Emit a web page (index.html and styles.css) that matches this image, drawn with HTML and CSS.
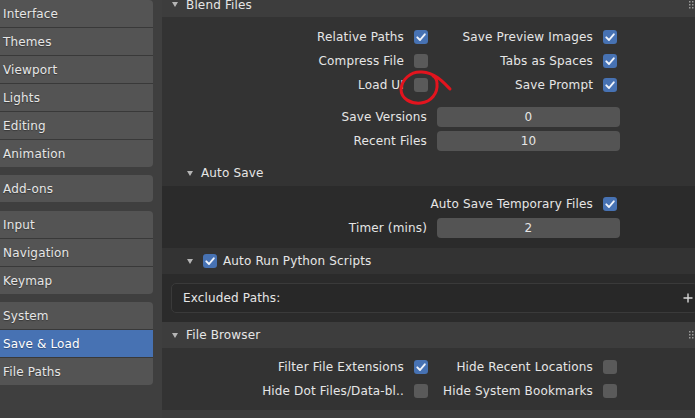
FILE: index.html
```html
<!DOCTYPE html>
<html>
<head>
<meta charset="utf-8">
<link rel="stylesheet" href="styles.css">
</head>
<body>
<div class="app">
  <nav class="sidebar">
    <div class="group">
      <div class="tab">Interface</div>
      <div class="tab">Themes</div>
      <div class="tab">Viewport</div>
      <div class="tab">Lights</div>
      <div class="tab">Editing</div>
      <div class="tab">Animation</div>
    </div>
    <div class="group g2">
      <div class="tab">Add-ons</div>
    </div>
    <div class="group g3">
      <div class="tab">Input</div>
      <div class="tab">Navigation</div>
      <div class="tab">Keymap</div>
    </div>
    <div class="group g4">
      <div class="tab">System</div>
      <div class="tab active">Save &amp; Load</div>
      <div class="tab">File Paths</div>
    </div>
  </nav>

  <main class="main">
    <section class="panel">
      <div class="panel-head first">
        <svg class="tri" width="6" height="5" viewBox="0 0 6 5"><polygon points="0,0 6,0 3,5"/></svg>
        <span class="head-title">Blend Files</span>
        <svg class="grip" width="5" height="8" viewBox="0 0 5 8"><rect x="0" y="0" width="1.5" height="1.5"/><rect x="3" y="0" width="1.5" height="1.5"/><rect x="0" y="3" width="1.5" height="1.5"/><rect x="3" y="3" width="1.5" height="1.5"/><rect x="0" y="6" width="1.5" height="1.5"/><rect x="3" y="6" width="1.5" height="1.5"/></svg>
      </div>
      <div class="panel-body blend">
        <div class="row2">
          <div class="cell left"><span>Relative Paths</span><span class="cb on"><svg width="14" height="14" viewBox="0 0 14 14"><path d="M3.3 7.3 L6 10 L10.8 4.3"/></svg></span></div>
          <div class="cell right"><span>Save Preview Images</span><span class="cb on"><svg width="14" height="14" viewBox="0 0 14 14"><path d="M3.3 7.3 L6 10 L10.8 4.3"/></svg></span></div>
        </div>
        <div class="row2">
          <div class="cell left"><span>Compress File</span><span class="cb"></span></div>
          <div class="cell right"><span>Tabs as Spaces</span><span class="cb on"><svg width="14" height="14" viewBox="0 0 14 14"><path d="M3.3 7.3 L6 10 L10.8 4.3"/></svg></span></div>
        </div>
        <div class="row2">
          <div class="cell left"><span>Load UI</span><span class="cb"></span></div>
          <div class="cell right"><span>Save Prompt</span><span class="cb on"><svg width="14" height="14" viewBox="0 0 14 14"><path d="M3.3 7.3 L6 10 L10.8 4.3"/></svg></span></div>
        </div>
        <div class="prow gap-top"><span class="plabel">Save Versions</span><div class="field">0</div></div>
        <div class="prow"><span class="plabel">Recent Files</span><div class="field">10</div></div>
      </div>

      <div class="sub-head">
        <svg class="tri" width="6" height="5" viewBox="0 0 6 5"><polygon points="0,0 6,0 3,5"/></svg>
        <span class="head-title">Auto Save</span>
      </div>
      <div class="sub-body autosave">
        <div class="row2">
          <div class="cell left"></div>
          <div class="cell right"><span>Auto Save Temporary Files</span><span class="cb on"><svg width="14" height="14" viewBox="0 0 14 14"><path d="M3.3 7.3 L6 10 L10.8 4.3"/></svg></span></div>
        </div>
        <div class="prow"><span class="plabel">Timer (mins)</span><div class="field">2</div></div>
      </div>

      <div class="sub-head">
        <svg class="tri" width="6" height="5" viewBox="0 0 6 5"><polygon points="0,0 6,0 3,5"/></svg>
        <span class="cb on head-cb"><svg width="14" height="14" viewBox="0 0 14 14"><path d="M3.3 7.3 L6 10 L10.8 4.3"/></svg></span>
        <span class="head-title">Auto Run Python Scripts</span>
      </div>
      <div class="sub-body autorun">
        <div class="listbox">
          <span>Excluded Paths:</span>
          <svg class="plus" width="10" height="10" viewBox="0 0 10 10"><path d="M5 0.5 V9.5 M0.5 5 H9.5"/></svg>
        </div>
      </div>
    </section>

    <section class="panel">
      <div class="panel-head">
        <svg class="tri" width="6" height="5" viewBox="0 0 6 5"><polygon points="0,0 6,0 3,5"/></svg>
        <span class="head-title">File Browser</span>
        <svg class="grip" width="5" height="8" viewBox="0 0 5 8"><rect x="0" y="0" width="1.5" height="1.5"/><rect x="3" y="0" width="1.5" height="1.5"/><rect x="0" y="3" width="1.5" height="1.5"/><rect x="3" y="3" width="1.5" height="1.5"/><rect x="0" y="6" width="1.5" height="1.5"/><rect x="3" y="6" width="1.5" height="1.5"/></svg>
      </div>
      <div class="panel-body browser">
        <div class="row2">
          <div class="cell left"><span>Filter File Extensions</span><span class="cb on"><svg width="14" height="14" viewBox="0 0 14 14"><path d="M3.3 7.3 L6 10 L10.8 4.3"/></svg></span></div>
          <div class="cell right"><span>Hide Recent Locations</span><span class="cb"></span></div>
        </div>
        <div class="row2">
          <div class="cell left"><span>Hide Dot Files/Data-bl..</span><span class="cb"></span></div>
          <div class="cell right"><span>Hide System Bookmarks</span><span class="cb"></span></div>
        </div>
      </div>
    </section>

    <section class="panel">
      <div class="panel-head"></div>
    </section>
  </main>

  <svg class="annot" width="695" height="418" viewBox="0 0 695 418">
    <path d="M450 89 C444 83 436 73 422 72 C410 71 402 80 401 89 C401 99 411 104 421 103 C431 102 438 93 437 84 C437 80 435 77 433 76"/>
  </svg>
</div>
</body>
</html>
```

FILE: styles.css
```css
html, body {
  margin: 0;
  padding: 0;
  width: 695px;
  height: 418px;
  overflow: hidden;
  background: #3d3d3d;
}

.app {
  position: relative;
  display: flex;
  width: 695px;
  height: 418px;
  overflow: hidden;
  font-family: "DejaVu Sans", "Liberation Sans", sans-serif;
  font-size: 12px;
  letter-spacing: 0.15px;
  color: #e6e6e6;
}

/* ---------- sidebar ---------- */
.sidebar {
  flex: 0 0 162px;
  width: 162px;
  background: #3f3f3f;
  display: flex;
  flex-direction: column;
}

.group {
  width: 153px;
  background: #545454;
  border-radius: 0 4px 4px 0;
  overflow: hidden;
}

.g2 { margin-top: 8px; }
.g3 { margin-top: 9px; }
.g4 { margin-top: 8px; }

.tab {
  height: 27px;
  line-height: 28px;
  padding-left: 3px;
  color: #e6e6e6;
  text-shadow: 0 1px 1px rgba(0, 0, 0, 0.35);
  white-space: nowrap;
}

.tab + .tab {
  border-top: 1px solid #393939;
}

.tab.active {
  background: #4772b3;
  color: #ffffff;
}

/* ---------- main ---------- */
.main {
  flex: 0 0 540px;
  width: 540px;
  display: flex;
  flex-direction: column;
  background: #2b2b2b;
}

.panel-head {
  height: 26px;
  flex: 0 0 26px;
  display: flex;
  align-items: center;
  padding-left: 10px;
  padding-right: 8px;
  background: #3d3d3d;
}

.panel-head.first {
  margin-top: -8px;
  height: 25px;
  flex: 0 0 25px;
}

.tri {
  flex: 0 0 6px;
  fill: #b5b5b5;
}

.head-title {
  margin-left: 8px;
  color: #e6e6e6;
  white-space: nowrap;
}

.grip {
  margin-left: auto;
  fill: #9a9a9a;
}

.panel-body {
  background: #333333;
}

.blend {
  padding: 8px 0 7px;
}

.browser {
  padding: 7px 0 7px;
}

.sub-head {
  height: 26px;
  display: flex;
  align-items: center;
  padding-left: 25px;
  background: #333333;
}

.sub-body {
  background: #2b2b2b;
}

.autosave {
  padding: 6px 0 8px;
}

.autorun {
  padding: 9px 4px 9px 9px;
}

.head-cb {
  margin-left: 10px;
}

.head-cb + .head-title {
  margin-left: 6px;
}

/* rows */
.row2 {
  display: flex;
  height: 24px;
}

.cell {
  display: flex;
  align-items: center;
  justify-content: flex-end;
  gap: 10px;
  white-space: nowrap;
}

.cell.left { width: 266px; }
.cell.right { width: 189px; }

.cb {
  flex: 0 0 14px;
  width: 14px;
  height: 14px;
  border-radius: 3px;
  background: #5a5a5a;
  display: block;
}

.cb.on {
  background: #4772b3;
}

.cb svg {
  display: block;
}

.cb path {
  fill: none;
  stroke: #f0f4fb;
  stroke-width: 1.9;
  stroke-linecap: round;
  stroke-linejoin: round;
}

.prow {
  display: flex;
  align-items: center;
  height: 24px;
}

.gap-top {
  margin-top: 8px;
}

.plabel {
  width: 265px;
  text-align: right;
  white-space: nowrap;
}

.field {
  margin-left: 10px;
  width: 183px;
  height: 20px;
  line-height: 20px;
  border-radius: 4px;
  background: #545454;
  text-align: center;
  color: #e6e6e6;
}

.listbox {
  height: 28px;
  display: flex;
  align-items: center;
  padding: 0 4px 0 11px;
  border: 1px solid #3a3a3a;
  border-radius: 5px;
  background: #282828;
}

.plus {
  margin-left: auto;
}

.plus path {
  stroke: #d6d6d6;
  stroke-width: 1.4;
  fill: none;
}

/* annotation overlay */
.annot {
  position: absolute;
  left: 0;
  top: 0;
  pointer-events: none;
}

.annot path {
  fill: none;
  stroke: #e3141e;
  stroke-width: 3;
  stroke-linecap: round;
  stroke-linejoin: round;
}
```
